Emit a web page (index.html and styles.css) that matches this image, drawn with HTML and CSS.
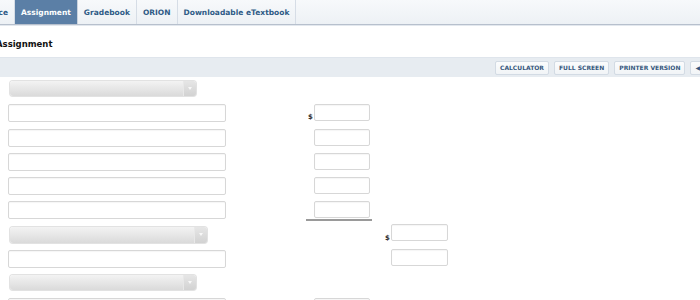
FILE: index.html
```html
<!DOCTYPE html>
<html>
<head>
<meta charset="utf-8">
<link rel="stylesheet" href="styles.css">
</head>
<body>
<nav class="tabs">
  <div class="tab tab-clip"><span>Read, Study &amp; Practice</span></div>
  <div class="tab active">Assignment</div>
  <div class="tab">Gradebook</div>
  <div class="tab">ORION</div>
  <div class="tab">Downloadable eTextbook</div>
</nav>
<h1 class="title">Assignment</h1>
<div class="toolbar">
  <button class="tbtn">CALCULATOR</button>
  <button class="tbtn">FULL SCREEN</button>
  <button class="tbtn">PRINTER VERSION</button>
  <button class="tbtn">&#9664; PREVIOUS</button>
</div>
<div class="form">
  <div class="c1"><div class="sel"><span class="arrow"></span></div></div>

  <div class="c1"><div class="inp"></div></div>
  <div class="c2"><span class="dollar">$</span><div class="inp sm"></div></div>

  <div class="c1"><div class="inp"></div></div>
  <div class="c2"><span class="dollar"></span><div class="inp sm"></div></div>

  <div class="c1"><div class="inp"></div></div>
  <div class="c2"><span class="dollar"></span><div class="inp sm"></div></div>

  <div class="c1"><div class="inp"></div></div>
  <div class="c2"><span class="dollar"></span><div class="inp sm"></div></div>

  <div class="c1"><div class="inp"></div></div>
  <div class="c2 total"><span class="dollar"></span><div class="inp sm"></div></div>

  <div class="c1"><div class="sel wide"><span class="arrow"></span></div></div>
  <div class="c3"><span class="dollar">$</span><div class="inp sm3"></div></div>

  <div class="c1"><div class="inp"></div></div>
  <div class="c3"><span class="dollar"></span><div class="inp sm3"></div></div>

  <div class="c1"><div class="sel"><span class="arrow"></span></div></div>

  <div class="c1"><div class="inp"></div></div>
  <div class="c2"><span class="dollar"></span><div class="inp sm"></div></div>
</div>
</body>
</html>
```
FILE: styles.css
```css
* { box-sizing: border-box; }
html, body { margin: 0; padding: 0; background: #fff; }
body {
  width: 700px;
  height: 300px;
  overflow: hidden;
  font-family: "DejaVu Sans", Verdana, sans-serif;
}
.tabs {
  display: flex;
  height: 25px;
  background: linear-gradient(#f7f9fb, #edf1f5);
  border-bottom: 1px solid #b7c0cd;
  box-shadow: 0 1px 0 #e3e8ee;
}
.tab {
  display: flex;
  align-items: center;
  padding: 0 6px;
  font-size: 7.5px;
  font-weight: bold;
  color: #2f5b86;
  border-right: 1px solid #d6dde6;
  white-space: nowrap;
}
.tab-clip {
  width: 15px;
  justify-content: flex-end;
  overflow: hidden;
  padding: 0 6px 0 0;
}
.tab-clip span { flex: none; }
.tab.active {
  background: #5b7fa6;
  color: #fff;
  border-right-color: #c9d2dd;
}
.title {
  margin: 0;
  height: 32px;
  padding-top: 14px;
  font-size: 8.5px;
  font-weight: bold;
  color: #111;
  text-indent: -4px;
  line-height: 10px;
}
.toolbar {
  display: flex;
  justify-content: flex-start;
  align-items: center;
  gap: 5px;
  height: 20px;
  background: #e7ecf1;
  border-top: 1px solid #dfe5ec;
  padding-left: 495px;
  overflow: hidden;
}
.tbtn {
  flex: none;
  height: 14px;
  padding: 0 4px;
  border: 1px solid #d3dbe4;
  border-radius: 2px;
  background: linear-gradient(#fbfcfd, #f1f4f7);
  font-family: "DejaVu Sans", Verdana, sans-serif;
  font-size: 6px;
  font-weight: bold;
  color: #36587e;
  white-space: nowrap;
  line-height: 12px;
}
.form {
  display: grid;
  grid-template-columns: 298px 77px 66px;
  grid-template-rows: 24px 25px 24px 24px 24px 24px 25px 24px 24px 24px;
  padding: 3px 0 0 8px;
}
.c1 { grid-column: 1; display: flex; align-items: flex-start; }
.c2 { grid-column: 2; display: flex; align-items: flex-start; }
.c3 { grid-column: 3; display: flex; align-items: flex-start; }
.c2, .c3 { align-self: start; }
.dollar {
  width: 8px;
  font-size: 7px;
  font-weight: bold;
  color: #333;
  padding-top: 9px;
  line-height: 8px;
  padding-left: 2px;
}
.inp {
  width: 218px;
  height: 18px;
  border: 1px solid #d7d7d7;
  border-radius: 2px;
  background: #fff;
  box-shadow: inset 0 1px 1px rgba(0,0,0,0.04);
}
.inp.sm { width: 56px; height: 17px; }
.inp.sm3 { width: 57px; height: 17px; }
.c3 .inp { margin-top: -1px; }
.total {
  width: 66px;
  height: 20px;
  border-bottom: 2px solid #9a9a9a;
}
.sel {
  position: relative;
  margin: 1px 0 0 2px;
  width: 186px;
  height: 15px;
  border-radius: 3px;
  background: linear-gradient(#f3f3f3, #dadada);
  box-shadow: 0 0 0 1px #e2e2e2;
}
.sel.wide { width: 197px; height: 16px; margin-top: 2px; }
.arrow {
  position: absolute;
  right: 0;
  top: 0;
  bottom: 0;
  width: 13px;
  border-left: 1px solid #e8e8e8;
  background: linear-gradient(#e6e6e6, #d2d2d2);
  border-radius: 0 3px 3px 0;
}
.arrow::after {
  content: "";
  position: absolute;
  left: 4px;
  top: 6px;
  border-left: 2px solid transparent;
  border-right: 2px solid transparent;
  border-top: 3px solid #f8f8f8;
}
```
